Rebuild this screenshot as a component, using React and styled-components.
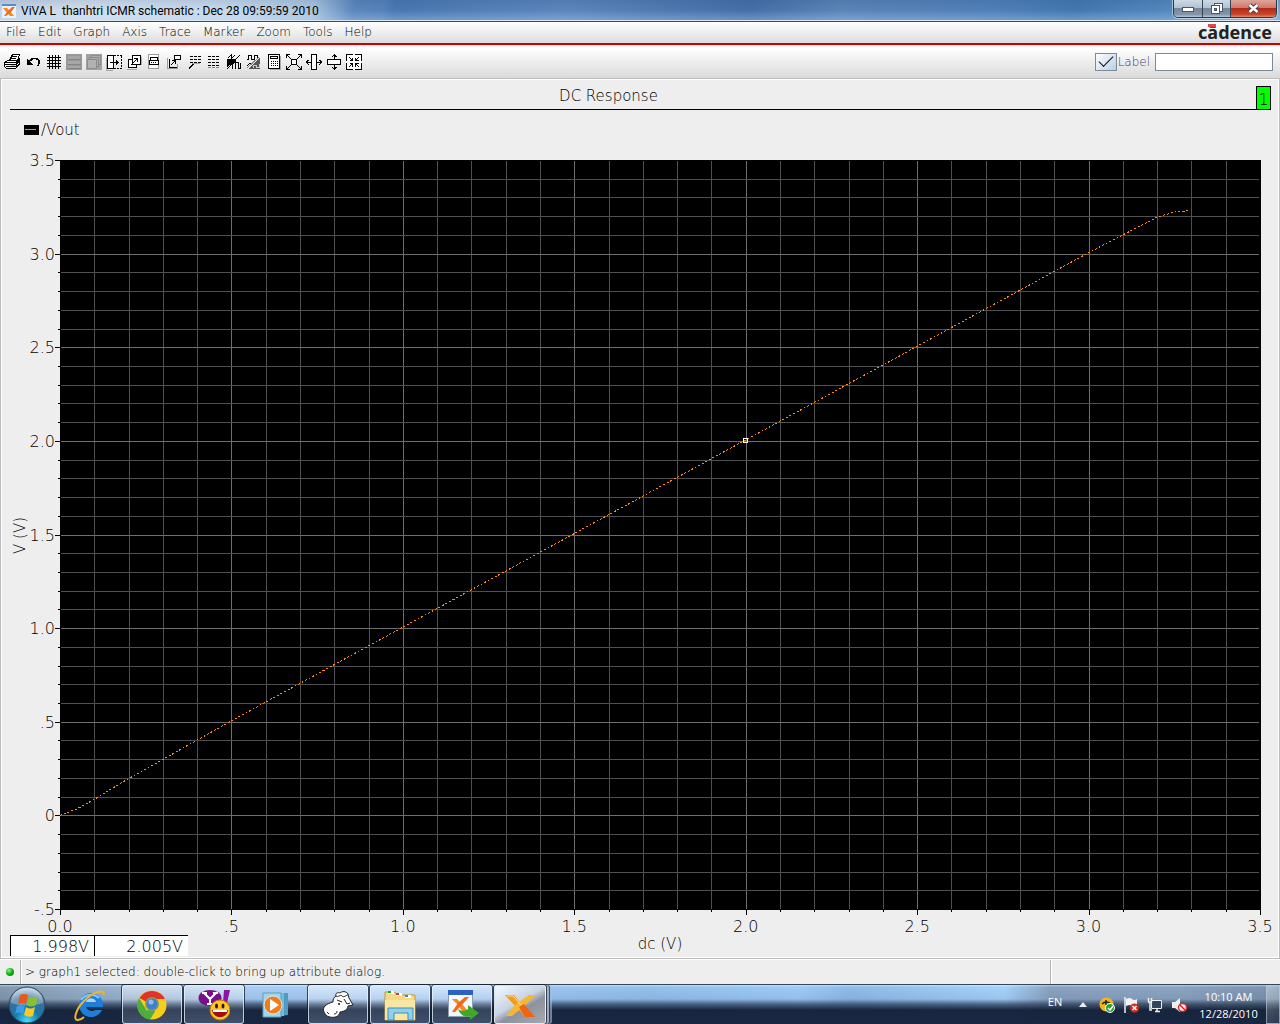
import React from "react";
import styled, { createGlobalStyle } from "styled-components";

const GlobalStyle = createGlobalStyle`
  * { box-sizing: border-box; }
  body { margin: 0; background: #eeeeee; font-family: "DejaVu Sans", "Noto Sans", sans-serif; font-weight: 200; font-size: 12px; color: #000000; }
  button { font: inherit; color: inherit; border: 0; padding: 0; background: none; }
`;

const Desktop = styled.div`
  display: flex;
  flex-direction: column;
  min-height: 100vh;
`;

/* ---------- title bar ---------- */

const TitleBar = styled.header`
  display: flex;
  align-items: flex-start;
  height: 22px;
  padding: 0 3px 0 2px;
  border-bottom: 1px solid #3b4b66;
  box-shadow: inset 0 -1px 0 #dbe7f4;
  background:
    linear-gradient(to bottom, rgba(20, 50, 100, 0.12), rgba(255, 255, 255, 0) 50%, rgba(190, 220, 250, 0.35)),
    linear-gradient(100deg, #c3d3e4 0, #d3e0ee 80px, #c6d9ec 230px, #a9c4e0 310px, #5b87bc 350px, #5682ba 380px,
      #4a78b2 390px, #5c86bd 560px, #456fa8 740px, #5b85b8 830px, #4f7fb8 990px, #4379b0 1060px, #5a8fc4 1190px, #7fa6cc 100%);
`;

const WindowTitle = styled.h1`
  flex: 1;
  display: flex;
  align-items: center;
  gap: 5px;
  margin: 0;
  height: 21px;
  font: 400 12px/20px Roboto, "Open Sans", sans-serif;
  color: #000;
  white-space: pre;
`;

const WindowButtons = styled.div`
  display: flex;
  height: 18px;
  border: 1px solid #2b3645;
  border-top: 0;
  border-radius: 0 0 5px 5px;
  overflow: hidden;
  box-shadow: 0 0 0 1px rgba(255, 255, 255, 0.5);
`;

const WindowButton = styled.button`
  display: flex;
  align-items: center;
  justify-content: center;
  width: ${(p) => (p.$close ? 46 : 28)}px;
  border-left: ${(p) => (p.$first ? "0" : "1px solid #3a4656")};
  background: ${(p) =>
    p.$close
      ? "linear-gradient(#dda59b 0, #cf7a6c 45%, #b22c17 50%, #c9462c 85%, #e08a70)"
      : "linear-gradient(#cdd9e4 0, #b2c2d2 45%, #75879c 50%, #8595a9 85%, #b6c8da)"};
`;

/* ---------- menu bar ---------- */

const MenuBar = styled.nav`
  display: flex;
  align-items: center;
  justify-content: space-between;
  height: 23px;
  padding: 0 8px 2px 6px;
  border-bottom: 2px solid #cc0000;
  background: linear-gradient(#ffffff, #dddddd);
`;

const MenuList = styled.div`
  display: flex;
  gap: 12px;
`;

const MenuItem = styled.button`
  height: 20px;
  line-height: 20px;
`;

const Brand = styled.span`
  position: relative;
  font: 700 18px/20px "Noto Sans", "Open Sans", sans-serif;
  color: #222;
`;

const BrandMark = styled.span`
  position: absolute;
  left: 10px;
  top: 2px;
  width: 8px;
  height: 3px;
  background: #e04848;
`;

/* ---------- tool bar ---------- */

const ToolBar = styled.div`
  display: flex;
  align-items: center;
  justify-content: space-between;
  height: 33px;
  padding: 0 7px 0 4px;
  background: linear-gradient(#eeeeee 0, #ffffff 3px, #dadada);
`;

const ToolGroup = styled.div`
  display: flex;
`;

const ToolButton = styled.button`
  display: flex;
  align-items: center;
  justify-content: center;
  width: 20px;
  height: 20px;
`;

const Glyph = styled.svg`
  display: block;
  overflow: visible;
  fill: none;
  stroke: #000;
`;

const LabelForm = styled.div`
  display: flex;
  align-items: center;
  gap: 1px;
`;

const CheckBox = styled.input`
  appearance: none;
  width: 22px;
  height: 18px;
  margin: 0;
  border: 1px solid #7a8a99;
  background: linear-gradient(135deg, #ffffff, #b8cfe5);
  display: grid;
  place-items: center;
  &:checked::after {
    content: "";
    width: 13px;
    height: 6px;
    border: solid #111;
    border-width: 0 0 1px 1px;
    transform: translateY(-2px) rotate(-45deg);
  }
`;

const LabelText = styled.label`
  color: #3c3c80;
  line-height: 18px;
  padding-right: 4px;
`;

const LabelInput = styled.input`
  width: 118px;
  height: 18px;
  border: 1px solid #7a8a99;
  background: #fff;
  font: inherit;
`;

/* ---------- graph panel ---------- */

const GraphPanel = styled.main`
  flex: 1;
  display: flex;
  flex-direction: column;
  border: 1px solid #bcbcbc;
  box-shadow: inset 0 0 0 1px #fff;
  color: #000;
`;

const GraphHeader = styled.div`
  display: flex;
  align-items: flex-end;
  height: 31px;
  padding: 0 8px 0 9px;
`;

const GraphTitle = styled.h2`
  flex: 1;
  margin: 0;
  padding-right: 49px;
  height: 26px;
  border-bottom: 1px solid #000;
  font-size: 15px;
  font-weight: 200;
  line-height: 24px;
  text-align: center;
`;

const PageBadge = styled.button`
  width: 15px;
  height: 24px;
  border: 1px solid #000;
  background: #00ff00;
  color: #000;
  font-size: 16px;
  line-height: 26px;
`;

const Legend = styled.div`
  display: flex;
  align-items: center;
  gap: 2px;
  height: 40px;
  margin-bottom: 10px;
  padding-left: 23px;
  font-size: 15px;
`;

const ChartGrid = styled.div`
  display: grid;
  grid-template-columns: 27px 27px 1fr;
  grid-template-rows: auto 20px;
  padding-right: 18px;
`;

const PlotDrawing = styled.svg`
  display: block;
  width: 100%;
  height: auto;
`;

const YTitle = styled.div`
  align-self: center;
  justify-self: end;
  margin-bottom: 5px;
  writing-mode: vertical-rl;
  transform: rotate(180deg);
  font-size: 15px;
  line-height: 16px;
`;

const YLabels = styled.div`
  display: flex;
  flex-direction: column;
  justify-content: space-between;
  align-items: flex-end;
  margin: -9px 0 -5px;
  font-size: 16px;
  line-height: 20px;
`;

const XLabels = styled.div`
  grid-column: 3;
  display: flex;
  justify-content: space-between;
  margin: 0 -17px 0 -13px;
  font-size: 16px;
  line-height: 24px;
`;

const XLabel = styled.span`
  width: 36px;
  text-align: center;
`;

const GraphFooter = styled.div`
  display: grid;
  padding: 0 19px 0 9px;
`;

const Readouts = styled.div`
  grid-area: 1 / 1;
  display: flex;
`;

const Readout = styled.output`
  width: ${(p) => (p.$wide ? 94 : 84)}px;
  height: 21px;
  padding-right: 5px;
  border: solid #000;
  border-width: 1px 0 0 1px;
  background: #fff;
  font-size: 16px;
  line-height: 22px;
  text-align: right;
`;

const XTitle = styled.div`
  grid-area: 1 / 1;
  justify-self: center;
  padding-left: 50px;
  font-size: 15px;
  line-height: 18px;
`;

/* ---------- status bar ---------- */

const StatusBar = styled.footer`
  display: grid;
  grid-template-columns: 20px 1fr 230px;
  height: 25px;
  border-top: 1px solid #fff;
`;

const StatusCell = styled.div`
  display: flex;
  align-items: center;
  padding-left: ${(p) => p.$pad || 0}px;
  border-left: ${(p) => (p.$first ? "0" : "1px solid #b4b4b4")};
  box-shadow: ${(p) => (p.$first ? "none" : "inset 1px 0 0 #fff")};
`;

const StatusLight = styled.span`
  width: 8px;
  height: 8px;
  border-radius: 50%;
  background: radial-gradient(circle at 35% 30%, #8df08d, #14b814 45%, #056b05);
`;

/* ---------- task bar ---------- */

const TaskBar = styled.div`
  display: flex;
  height: 40px;
  border-top: 1px solid #34475a;
  background:
    linear-gradient(rgba(255, 255, 255, 0.45) 0, rgba(255, 255, 255, 0) 2px, rgba(20, 40, 70, 0.08) 14px,
      rgba(20, 34, 60, 0.6) 19px, rgba(19, 31, 55, 0.96) 25px, rgba(22, 36, 64, 0.98) 100%),
    linear-gradient(90deg, #8599ae 0, #94adc8 90px, #a9cdf3 250px, #a6cdf8 400px, #9cc6f1 540px, #94c0ec 650px,
      #9fcaf7 800px, #8fbbe8 850px, #a6d2fb 1005px, #8aa2c0 1050px, #8ba4c0 1180px, #7b92ad 100%);
`;

const StartButton = styled.button`
  width: 54px;
  margin-right: 6px;
  display: grid;
  place-items: center;
`;

const TaskList = styled.div`
  flex: 1;
  display: flex;
  gap: 2px;
`;

const TaskButton = styled.button`
  width: ${(p) => (p.$stacked ? 52 : 60)}px;
  height: 39px;
  display: grid;
  place-items: center;
  border: ${(p) => (p.$open ? "1px solid rgba(235, 244, 255, 0.75)" : "1px solid transparent")};
  border-radius: 3px;
  box-shadow: ${(p) =>
    p.$stacked
      ? "0 0 0 1px rgba(15,25,40,.75), 3px 0 0 0 rgba(200,215,235,.7), 4px 0 0 0 rgba(20,32,52,.7), 6px 0 0 0 rgba(170,190,215,.6)"
      : p.$open
      ? "0 0 0 1px rgba(15, 25, 40, 0.75)"
      : "none"};
  background: ${(p) =>
    p.$active
      ? "linear-gradient(150deg, #f2f8ff 0, #c8d4e2 45%, #8e929c 60%, #a6a9b1 100%)"
      : p.$open
      ? "linear-gradient(rgba(255,255,255,.5) 0, rgba(255,255,255,.22) 45%, rgba(150,165,185,.22) 60%, rgba(170,185,205,.28))"
      : "none"};
`;

const Tray = styled.div`
  display: flex;
  align-items: center;
  color: #fff;
  font-family: "Open Sans", "Noto Sans", sans-serif;
  font-weight: 400;
`;

const Language = styled.button`
  width: 32px;
  height: 24px;
  margin-bottom: 6px;
  font-size: 11px;
  color: #fff;
`;

const TrayButton = styled.button`
  width: 24px;
  height: 24px;
  display: grid;
  place-items: center;
  color: #fff;
`;

const Clock = styled.button`
  width: 75px;
  font-size: 11px;
  line-height: 17px;
  color: #fff;
`;

const ShowDesktop = styled.button`
  width: 14px;
  height: 39px;
  border: 1px solid rgba(190, 205, 225, 0.6);
  background: linear-gradient(135deg, rgba(255, 255, 255, 0.35), rgba(255, 255, 255, 0.08));
`;

/* ---------- drawings ---------- */

const MENUS = ["File", "Edit", "Graph", "Axis", "Trace", "Marker", "Zoom", "Tools", "Help"];

const dotRows = (x, y, rows, cols) => {
  const out = [];
  for (let r = 0; r < rows; r++)
    for (let c = 0; c < cols; c++) out.push(<path key={r + "-" + c} d={`M${x + c * 4} ${y + r * 3}h3`} />);
  return out;
};

const TOOLS = [
  ["Print", <g>
    <path d="M3.500 6.500l3-6h7l-2 6" fill="#fff" />
    <path d="M6 2.500h5M5 4.500h5" />
    <path d="M-1.500 8.500l3-2h10l2-2v6l-4 4h-9l-2-2z" fill="#fff" />
    <path d="M-1 8.500h11l3-3M-1 10.500h11l3-3M10.500 8v6M0 12.500h10M13 10.500l-3 2" />
    <path d="M5 11.500h4" stroke="#d8d020" />
  </g>],
  ["Undo", <g>
    <path d="M4 7C6 4 11 3 13 7c.5 2-.5 4-1.500 5.500" strokeWidth="1.600" />
    <path d="M1 5v6h6z" fill="#000" stroke="none" />
  </g>],
  ["Grid", <path d="M3.500 1v14M6.500 1v14M9.500 1v14M12.500 1v14M1 3.500h14M1 6.500h14M1 9.500h14M1 12.500h14" />],
  ["Strips", <g stroke="none"><path d="M0 0h16v16H0z" fill="#999" /><path d="M2 2h12v3H2zM2 7h12v3H2zM2 12h12v2H2z" fill="#a6a6a6" /><path d="M2 5h13v1H2zM2 10h13v1H2zM2 14h13v1H2z" fill="#858585" /></g>],
  ["Cards", <g stroke="#8c8c8c"><path d="M0 0h16v16H0z" fill="#a2a2a2" stroke="none" /><path d="M5.500 1.500h9v9h-9z" fill="#acacac" /><path d="M3.500 3.500h9v9h-9z" fill="#acacac" /><path d="M1.500 5.500h9v9h-9z" fill="#b2b2b2" /></g>],
  ["Shift", <g><path d="M0 4v12h7" stroke="#aaa" /><path d="M1.500 1.500h6v13h-6z" fill="#fff" /><path d="M8 1.500h8M8 14.500h8M15.500 2v12" strokeDasharray="2 1" /><path d="M4 8.500h9M10.500 6v5M11.500 7v3" /></g>],
  ["Copy out", <g><path d="M1 15.500h10M15.500 3v8" stroke="#aaa" /><path d="M2.500 5.500h8v8h-8z" fill="#fff" /><path d="M6.500 1.500h8v9h-8z" fill="#fff" /><path d="M5 11l6-6M8 4.500h4M11.500 4v4" /></g>],
  ["Print window", <g><path d="M2.500.5h10v14h-10z" fill="#fff" stroke="#999" /><path d="M4.500 3.500h7v3h-7z" /><path d="M3.500 6.500h9v4h-9z" fill="#fff" /><path d="M5 8.500h6" strokeDasharray="1 1" /></g>],
  ["Detach", <g><path d="M1.500 4v10.500h10v-5" stroke="#999" /><path d="M3.500 5v8h7" /><path d="M8.500 1.500h6v4h-6z" fill="#fff" /><path d="M5 11l4-4M6 6.500h4M9.500 6v4" /></g>],
  ["Flag", <g>{dotRows(4, 2.5, 3, 3)}<path d="M3 14l6-5" strokeWidth="1.500" /><path d="M6 9.500h8" stroke="#aaa" /></g>],
  ["Table", <g>{dotRows(2, 2.5, 4, 3)}<path d="M2 13.500h12" stroke="#888" strokeDasharray="3 1" /></g>],
  ["Waves", <g><path d="M1 5h8L1 14z" fill="#000" stroke="none" /><path d="M2 4L5 1v4l4-4" /><path d="M14 1L1 15" /><path d="M6 15v-4l3-3v6M9.500 14.500V8.500h3v6h2v-6" /></g>],
  ["Wave shade", <g><path d="M1 5.500h1.500v-4h3v4h3v-4h3v3M1 12l3-3 3 3" /><path d="M14 3v12H3z" fill="#555" stroke="none" /><path d="M7 14v-3h3v2h3v-3" stroke="#ccc" /><path d="M1 14L13 3" stroke="#888" /></g>],
  ["Calculator", <g><path d="M4 15.500h10.500V2" stroke="#aaa" /><path d="M2.500.5h11v14h-11z" fill="#fff" /><path d="M4.500 2.500h7v2h-7z" /><path d="M5 7.500h7M5 9.500h7M5 11.500h7" strokeDasharray="1 1" /></g>],
  ["Fit", <g><path d="M5.500 5.500h5v5h-5z" fill="#fff" /><path d="M5 5L1 1M11 5l4-4M5 11l-4 4M11 11l4 4" /><path d="M.5 4V.5H4M12 .5h3.500V4M.5 12v3.500H4M12 15.500h3.500V12" /></g>],
  ["Fit X", <g><path d="M5.500.5h5v15h-5z" fill="#fff" /><path d="M0 8.500h5M11 8.500h5M2.500 6L.5 8l2 3M13.500 6l2 2-2 3" /></g>],
  ["Fit Y", <g><path d="M1.500 5.500h13v5h-13z" fill="#fff" /><path d="M8.500 0v5M8.500 11v5M6 3l2-2 3 2M6 13l2 2 3-2" /></g>],
  ["Zoom in", <g><path d="M.5.5h15v15H.5z" fill="#fff" /><path d="M7 .5h2M7 15.500h2M.5 7v2M15.500 7v2" stroke="#fff" /><path d="M3 3l3 3M13 3l-3 3M3 13l3-3M13 13l-3-3" /><path d="M3.500 6.500h3v-3M12.500 6.500h-3v-3M3.500 9.500h3v3M12.500 9.500h-3v3" /></g>],
];

/* Plot geometry: 1200 x 749 units, with a 5 unit gutter for the tick marks. */
const GUTTER = 5;
const PLOT_W = 1200;
const PLOT_H = 749;
const X_MAX = 3.5;
const Y_MIN = -0.5;
const Y_MAX = 3.5;
const X_LABELS = ["0.0", ".5", "1.0", "1.5", "2.0", "2.5", "3.0", "3.5"];
const Y_LABELS = ["3.5", "3.0", "2.5", "2.0", "1.5", "1.0", ".5", "0", "-.5"];
const VOUT = [[0, 0], [0.05, 0.035], [0.1, 0.085], [0.15, 0.142], [0.2, 0.196], [0.5, 0.505], [1, 1.005], [2, 2.005], [3, 3.005], [3.2, 3.195], [3.25, 3.222], [3.295, 3.23]];

const px = (v) => GUTTER + (v / X_MAX) * PLOT_W;
const py = (v) => ((Y_MAX - v) / (Y_MAX - Y_MIN)) * PLOT_H;

function Plot() {
  const xs = Array.from({ length: 36 }, (_, i) => ({ at: Math.round(px(i / 10)) + 0.5, major: i % 5 === 0 }));
  const ys = Array.from({ length: 41 }, (_, i) => ({ at: Math.round(py(Y_MAX - i / 10)) + 0.5, major: i % 5 === 0 }));
  const right = GUTTER + PLOT_W;
  return (
    <PlotDrawing viewBox="0 0 1206 755" shapeRendering="crispEdges" role="img" aria-label="Vout against dc">
      <rect x={GUTTER} y="0" width={PLOT_W + 1} height={PLOT_H + 1} fill="#000" />
      {xs.map((l, i) => (
        <g key={i}>
          {i > 0 && i < 35 && <path d={`M${l.at} 1V${PLOT_H}`} stroke={l.major ? "#6e6e6e" : "#505050"} />}
          <path d={`M${l.at} ${PLOT_H}v${l.major ? 6 : 3}`} stroke="#000" />
        </g>
      ))}
      {ys.map((l, i) => (
        <g key={i}>
          {i > 0 && i < 40 && <path d={`M${GUTTER + 1} ${l.at}H${right - 1}`} stroke={l.major ? "#6e6e6e" : "#505050"} />}
          <path d={`M${GUTTER} ${l.at}h${l.major ? -5 : -2}`} stroke="#000" />
        </g>
      ))}
      <polyline points={VOUT.map(([a, b]) => `${px(a)},${py(b)}`).join(" ")} fill="none" stroke="#ff8c00" strokeDasharray="2 2" />
      <rect x="688.5" y="278.5" width="4" height="4" fill="none" stroke="#fff" />
    </PlotDrawing>
  );
}

const OrangeX = () => (
  <svg width="34" height="34" viewBox="0 0 34 34" aria-hidden="true">
    <path d="M2 7h9l8 10 12 12h-9l-8-9z" fill="#f29a1c" />
    <path d="M33 7h-7L13 16 3 28h6l12-10z" fill="#f7b733" />
    <path d="M16 19l5-3 11 13H22z" fill="#ee6412" />
    <path d="M4 8h6l8 9" fill="none" stroke="#ffdf9a" />
  </svg>
);

const TitleIcon = () => (
  <svg width="14" height="14" viewBox="0 0 14 14" aria-hidden="true">
    <path d="M0 0h14v14H0z" fill="#e9f1fa" />
    <path d="M0 0h14v2H0z" fill="#5a8ad0" />
    <path d="M1 4h4l3 3 4 5H8L5 9z" fill="#f28c1c" />
    <path d="M13 3h-3L6 7l-4 5h2l5-4z" fill="#f46a1a" />
  </svg>
);

const Orb = () => (
  <svg width="38" height="38" viewBox="0 0 38 38" aria-hidden="true">
    <defs>
      <radialGradient id="orb" cx="50%" cy="95%" r="90%">
        <stop offset="0" stopColor="#3fe0ff" /><stop offset=".4" stopColor="#1778a8" /><stop offset=".75" stopColor="#3f6f96" /><stop offset="1" stopColor="#b4cbdc" />
      </radialGradient>
    </defs>
    <circle cx="19" cy="19" r="18" fill="url(#orb)" stroke="#23465f" />
    <path d="M3 17a16 15 0 0 1 32 0q-16 5-32 0z" fill="#fff" opacity=".3" />
    <path d="M12 9q4-2 8 0l-2 9q-4-2-8 0z" fill="#e8571c" />
    <path d="M21 10q4 3 9 0l-2 9q-5 3-9 0z" fill="#86c232" />
    <path d="M9 20q4-2 8 0l-2 8q-4-3-8 0z" fill="#3b9be6" />
    <path d="M18 21q4 3 9 0l-2 9q-4 2-9-1z" fill="#fbc926" />
  </svg>
);

const Explorer = () => (
  <svg width="34" height="34" viewBox="0 0 34 34" aria-hidden="true">
    <path d="M29 22A12 12 0 1 1 30 16v3H13c1 4 7 5 9 3z" fill="#1f7fd6" />
    <path d="M13 14h10c-1-5-9-5-10 0z" fill="#b4cfe8" />
    <path d="M8 12a12 12 0 0 1 18-2" fill="none" stroke="#7cc8ff" strokeWidth="2" />
    <path d="M31 7C32 0 20 4 11 13S0 33 5 32c3 0 6-3 6-3" fill="none" stroke="#f0b429" strokeWidth="2" />
  </svg>
);

const Chrome = () => (
  <svg width="30" height="30" viewBox="0 0 30 30" aria-hidden="true">
    <circle cx="15" cy="15" r="14.500" fill="#f8ce1c" />
    <path d="M15 15L2.500 8A14.500 14.500 0 0 1 28 9H15z" fill="#e0342a" />
    <path d="M15 15l-5 6-8-13a14.500 14.500 0 0 0 11 21.500l5-8z" fill="#4cae3c" />
    <circle cx="15" cy="14" r="7" fill="#8a9a58" /><circle cx="15" cy="14" r="5.500" fill="#3d7fd0" /><circle cx="14" cy="12" r="2.500" fill="#8fbdf0" />
  </svg>
);

const Messenger = () => (
  <svg width="32" height="32" viewBox="0 0 32 32" aria-hidden="true">
    <ellipse cx="12" cy="9" rx="11.500" ry="8" fill="#78108c" />
    <path d="M26 1h6l-3 13h-4z" fill="#8c14a4" />
    <path d="M6 4l6 6 6-6M12 10v5M4 4h5M15 4h5M9 15h6" fill="none" stroke="#fff" strokeWidth="2" />
    <circle cx="22" cy="21" r="10" fill="#fbc828" stroke="#c87808" />
    <ellipse cx="18.500" cy="17" rx="1.500" ry="2.500" fill="#412" /><ellipse cx="25" cy="17" rx="1.500" ry="2.500" fill="#412" />
    <path d="M14 21h16c-1 9-14 10-16 0z" fill="#a01010" /><path d="M15 21h14v2H15z" fill="#fff" />
  </svg>
);

const Media = () => (
  <svg width="28" height="28" viewBox="0 0 28 28" aria-hidden="true">
    <path d="M9 2h17v22l-17 2z" fill="#4f9cc0" /><path d="M5 2h17v23H5z" fill="#79bbda" /><path d="M1 2h18v24H1z" fill="#a3d4ea" stroke="#5aa0c0" />
    <circle cx="11" cy="14" r="9" fill="#f07c1a" stroke="#d8e8f0" /><path d="M8 8l9 6-9 6z" fill="#fff" />
  </svg>
);

const Goat = () => (
  <svg width="32" height="30" viewBox="0 0 32 30" aria-hidden="true">
    <path d="M2 22c-2-5 2-8 9-10 0-3 1-5 3-6-1-3 2-4 4-3 2-2 6-2 8 1l1 4 4 7-5 1c-1 5-4 5-8 6-1 5-6 6-10 5-3 0-5-3-6-5z" fill="#fff" stroke="#222" />
    <path d="M14 6c2 2 4-2 6 0s4-1 6-1M15 10l5 2M22 9l3 5 3-1M5 22l2 2M12 24c2 0 3-1 3-3" fill="none" stroke="#222" />
    <circle cx="17" cy="14" r="1" fill="#111" />
  </svg>
);

const Folder = () => (
  <svg width="34" height="32" viewBox="0 0 34 32" aria-hidden="true">
    <path d="M2 3h10l2 3h18v25H2z" fill="#f3d98a" stroke="#c09a3c" />
    <path d="M5 2h6v3H5zM13 4h6v3h-6zM22 6h6v3h-6z" fill="#fff" />
    <path d="M5 2h3v2H5z" fill="#1da81d" /><path d="M13 4h3v2h-3z" fill="#d83a2a" /><path d="M22 6h3v2h-3z" fill="#2a8ad8" />
    <path d="M2 11h30v20H2z" fill="#f8e6a4" />
    <path d="M5 19h25v12h-5v-7H11v7H5z" fill="#8ed0ee" stroke="#3f8fb8" />
  </svg>
);

const ExportX = () => (
  <svg width="34" height="32" viewBox="0 0 34 32" aria-hidden="true">
    <path d="M3.500 1.500h24v26h-24z" fill="#f4f8fc" stroke="#8aa0b8" /><path d="M3 1h25v5H3z" fill="#2a62c0" />
    <path d="M7 10h5l5 5 6 7h-6l-4-6z" fill="#f28c1c" /><path d="M24 8h-4l-7 6-6 9h3l7-7z" fill="#f46a1a" />
    <path d="M13 20c4 3 8 2 10 0v-4l11 8-9 7v-4c-5 2-10-1-12-7z" fill="#3fa82a" />
  </svg>
);

const TASKS = [
  ["Internet Explorer", <Explorer />, {}],
  ["Chrome", <Chrome />, { $open: true }],
  ["Messenger", <Messenger />, { $open: true }],
  ["Media Player", <Media />, {}],
  ["Goat", <Goat />, { $open: true }],
  ["Folders", <Folder />, { $open: true }],
  ["Exceed", <ExportX />, { $open: true }],
  ["Exceed session", <OrangeX />, { $open: true, $active: true, $stacked: true }],
];

const TRAY = [
  ["Show hidden icons", <svg width="8" height="5" viewBox="0 0 8 5"><path d="M4 0l4 5H0z" fill="#e6edf6" /></svg>],
  ["Norton", <svg width="16" height="16" viewBox="0 0 16 16"><circle cx="7.500" cy="7.500" r="7" fill="#f4b41c" /><path d="M3 7q4-4 9 0M7 3v5" stroke="#222" strokeWidth="1.500" fill="none" /><circle cx="11" cy="11" r="4.500" fill="#1fa32c" stroke="#fff" /><path d="M9 11l2 2 3-4" stroke="#fff" strokeWidth="1.500" fill="none" /></svg>],
  ["Action Center", <svg width="16" height="16" viewBox="0 0 16 16"><path d="M2 0v16" stroke="#eee" strokeWidth="1.500" /><path d="M3 2q4-2 6 0t5 0v8q-3 1-5-1t-6 0z" fill="#f2f2f2" /><circle cx="11.500" cy="11" r="4.500" fill="#d92a1c" /><path d="M9.500 9l4 4M13.500 9l-4 4" stroke="#fff" strokeWidth="1.500" /></svg>],
  ["Network", <svg width="16" height="16" viewBox="0 0 16 16" fill="none" stroke="#eee"><path d="M4.500 3.500h10v8h-10z" fill="#33445c" /><path d="M8 14.500h5M10 12v2M1.500 1v4h3V1M3 5v8h2" strokeWidth="1.500" /></svg>],
  ["Volume", <svg width="16" height="16" viewBox="0 0 16 16"><path d="M1 5h3l5-4v14l-5-4H1z" fill="#eee" /><circle cx="11.500" cy="10.500" r="4" fill="#fff" stroke="#e0201c" strokeWidth="1.500" /><path d="M9 8l5 5" stroke="#e0201c" strokeWidth="1.500" /></svg>],
];

export default function App() {
  return (
    <>
      <GlobalStyle />
      <Desktop>
        <TitleBar>
          <WindowTitle><TitleIcon />{"ViVA L  thanhtri ICMR schematic : Dec 28 09:59:59 2010"}</WindowTitle>
          <WindowButtons>
            <WindowButton $first aria-label="Minimize">
              <svg width="12" height="6" viewBox="0 0 12 6"><rect x=".5" y="1.500" width="11" height="4" fill="#fff" stroke="#4a5666" /></svg>
            </WindowButton>
            <WindowButton aria-label="Restore">
              <svg width="12" height="12" viewBox="0 0 12 12" shapeRendering="crispEdges"><path d="M3.500.5h8v8h-8z" fill="#fff" stroke="#4a5666" /><path d="M.5 2.500h8v8h-8z" fill="#fff" stroke="#4a5666" /><path d="M3.500 5.500h2v2h-2z" fill="#8090a4" stroke="#4a5666" /></svg>
            </WindowButton>
            <WindowButton $close aria-label="Close">
              <svg width="13" height="11" viewBox="0 0 13 11"><path d="M2.500 2l8 7M10.500 2l-8 7" stroke="#4f3a40" strokeWidth="4.500" /><path d="M2.500 2l8 7M10.500 2l-8 7" stroke="#fff" strokeWidth="2.500" /></svg>
            </WindowButton>
          </WindowButtons>
        </TitleBar>

        <MenuBar>
          <MenuList>{MENUS.map((m) => <MenuItem key={m}>{m}</MenuItem>)}</MenuList>
          <Brand>cādence<BrandMark /></Brand>
        </MenuBar>

        <ToolBar>
          <ToolGroup>
            {TOOLS.map(([name, art]) => (
              <ToolButton key={name} aria-label={name}>
                <Glyph width="16" height="16" viewBox="0 0 16 16" shapeRendering="crispEdges">{art}</Glyph>
              </ToolButton>
            ))}
          </ToolGroup>
          <LabelForm>
            <CheckBox id="label-on" type="checkbox" defaultChecked />
            <LabelText htmlFor="label-on">Label</LabelText>
            <LabelInput aria-label="Label text" type="text" />
          </LabelForm>
        </ToolBar>

        <GraphPanel>
          <GraphHeader>
            <GraphTitle>DC Response</GraphTitle>
            <PageBadge>1</PageBadge>
          </GraphHeader>
          <Legend>
            <svg width="15" height="10" viewBox="0 0 15 10" shapeRendering="crispEdges"><path d="M0 0h15v10H0z" fill="#000" /><path d="M1 4.500h11" stroke="#ff8c00" /></svg>
            /Vout
          </Legend>
          <ChartGrid>
            <YTitle>V (V)</YTitle>
            <YLabels>{Y_LABELS.map((t) => <span key={t}>{t}</span>)}</YLabels>
            <Plot />
            <XLabels>{X_LABELS.map((t) => <XLabel key={t}>{t}</XLabel>)}</XLabels>
          </ChartGrid>
          <GraphFooter>
            <Readouts>
              <Readout>1.998V</Readout>
              <Readout $wide>2.005V</Readout>
            </Readouts>
            <XTitle>dc (V)</XTitle>
          </GraphFooter>
        </GraphPanel>

        <StatusBar>
          <StatusCell $first $pad={6}><StatusLight /></StatusCell>
          <StatusCell $pad={4}>&gt; graph1 selected: double-click to bring up attribute dialog.</StatusCell>
          <StatusCell />
        </StatusBar>

        <TaskBar>
          <StartButton aria-label="Start"><Orb /></StartButton>
          <TaskList>
            {TASKS.map(([name, art, look]) => <TaskButton key={name} aria-label={name} {...look}>{art}</TaskButton>)}
          </TaskList>
          <Tray>
            <Language>EN</Language>
            {TRAY.map(([name, art]) => <TrayButton key={name} aria-label={name}>{art}</TrayButton>)}
            <Clock>10:10 AM<br />12/28/2010</Clock>
            <ShowDesktop aria-label="Show desktop" />
          </Tray>
        </TaskBar>
      </Desktop>
    </>
  );
}
